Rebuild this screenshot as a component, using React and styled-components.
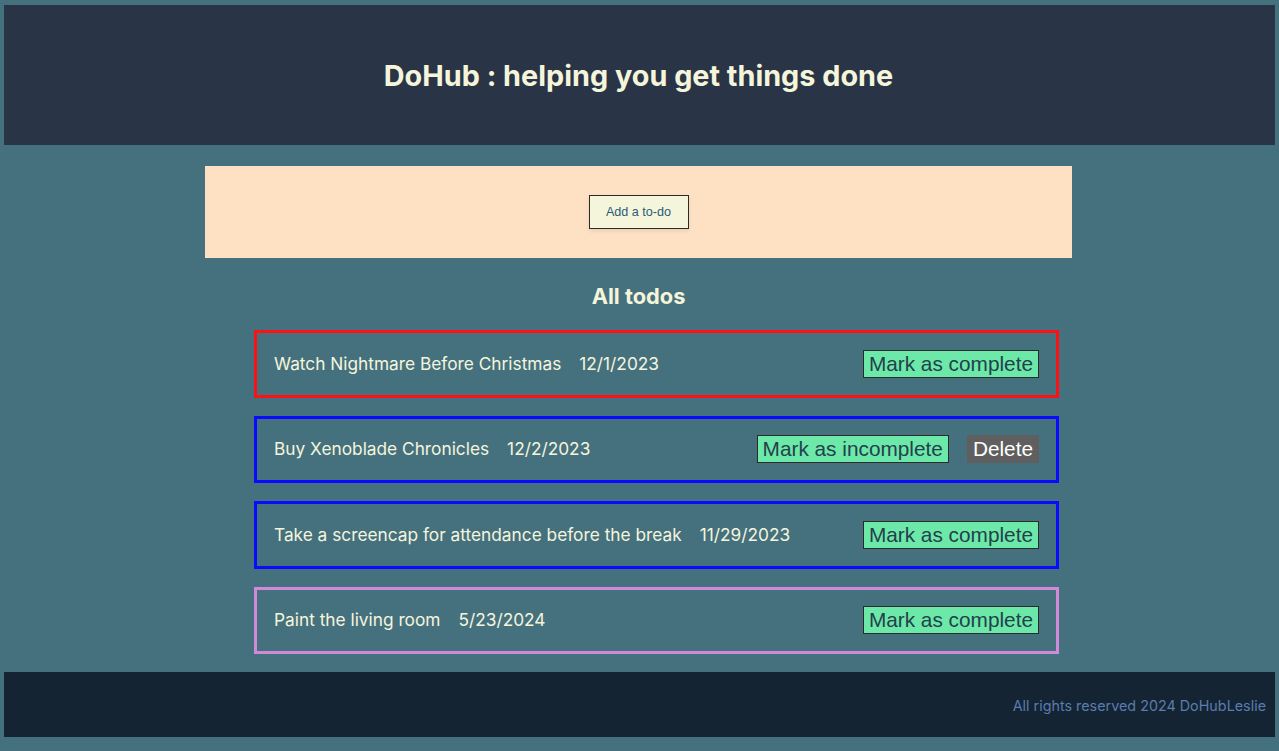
import React from 'react';
import styled, { createGlobalStyle } from 'styled-components';

const GlobalStyle = createGlobalStyle`
  html, body {
    margin: 0;
    padding: 0;
    background: #45717f;
  }
  body {
    font-family: Inter, "Noto Sans", sans-serif;
    color: #f5f5dc;
  }
`;

const Page = styled.div`
  padding: 5px 4px 14px;
  display: flex;
  flex-direction: column;
`;

const Header = styled.header`
  height: 140px;
  background: #293546;
  display: flex;
  align-items: center;
  justify-content: center;
`;

const Title = styled.h1`
  margin: 0;
  font-size: 28.8px;
  font-weight: 700;
  color: #f5f5dc;
  transform: translateX(-1px);
`;

const Main = styled.main`
  width: 867px;
  margin: 21px auto 0;
  transform: translateX(-1px);
`;

const FormBox = styled.form`
  height: 92px;
  background: #fee1c2;
  display: flex;
  align-items: center;
  justify-content: center;
`;

const AddButton = styled.button`
  width: 100px;
  height: 34px;
  background: #f5f5dc;
  border: 1px solid #2b2b2b;
  color: #2a5a78;
  font-family: "Liberation Sans", Arial, sans-serif;
  font-size: 12.6px;
  box-shadow: 0 2px 4px rgba(0, 0, 0, 0.08);
  cursor: pointer;
`;

const SectionTitle = styled.h2`
  margin: 26px 0 0;
  text-align: center;
  font-size: 21.8px;
  font-weight: 700;
  line-height: 24px;
  color: #f5f5dc;
`;

const List = styled.ul`
  list-style: none;
  margin: 22px 0 0;
  padding: 0 13px 0 49px;
  display: flex;
  flex-direction: column;
  gap: 18px;
`;

const Card = styled.li`
  border: 3px solid ${(p) => p.$color};
  padding: 16.75px 17px;
  display: flex;
  align-items: center;
`;

const Label = styled.span`
  font-size: 17.3px;
  color: #f5f5dc;
  line-height: 20px;
`;

const DateText = styled(Label)`
  margin-left: 18px;
`;

const Actions = styled.div`
  margin-left: auto;
  display: flex;
  align-items: center;
  gap: 18px;
`;

const ActionButton = styled.button`
  height: 28px;
  padding: 1px 5px;
  font-family: "Liberation Sans", Arial, sans-serif;
  font-size: 20.8px;
  line-height: 24px;
  cursor: pointer;
  background: ${(p) => (p.$danger ? '#5f5f5f' : '#6ce9a8')};
  color: ${(p) => (p.$danger ? '#ffffff' : '#24404c')};
  border: 1px solid ${(p) => (p.$danger ? '#5f5f5f' : '#2b2b2b')};
`;

const Footer = styled.footer`
  margin-top: 18px;
  height: 65px;
  background: #142433;
  display: flex;
  align-items: center;
  justify-content: flex-end;
  padding-right: 9px;
`;

const FooterText = styled.p`
  margin: 0;
  font-size: 14.35px;
  color: #5a7cae;
  transform: translateY(1px);
`;

const todos = [
  { id: 1, title: 'Watch Nightmare Before Christmas', date: '12/1/2023', done: false, color: '#ff1015' },
  { id: 2, title: 'Buy Xenoblade Chronicles', date: '12/2/2023', done: true, color: '#0a0aff' },
  { id: 3, title: 'Take a screencap for attendance before the break', date: '11/29/2023', done: false, color: '#0a0aff' },
  { id: 4, title: 'Paint the living room', date: '5/23/2024', done: false, color: '#d08ad8' },
];

const App = () => {
  const onSubmit = (e) => e.preventDefault();

  return (
    <Page>
      <GlobalStyle />
      <Header>
        <Title>DoHub : helping you get things done</Title>
      </Header>
      <Main>
        <FormBox onSubmit={onSubmit}>
          <AddButton type="submit">Add a to-do</AddButton>
        </FormBox>
        <SectionTitle>All todos</SectionTitle>
        <List>
          {todos.map((todo) => (
            <Card key={todo.id} $color={todo.color}>
              <Label>{todo.title}</Label>
              <DateText>{todo.date}</DateText>
              <Actions>
                <ActionButton>{todo.done ? 'Mark as incomplete' : 'Mark as complete'}</ActionButton>
                {todo.done && <ActionButton $danger>Delete</ActionButton>}
              </Actions>
            </Card>
          ))}
        </List>
      </Main>
      <Footer>
        <FooterText>All rights reserved 2024 DoHubLeslie</FooterText>
      </Footer>
    </Page>
  );
};

export default App;
